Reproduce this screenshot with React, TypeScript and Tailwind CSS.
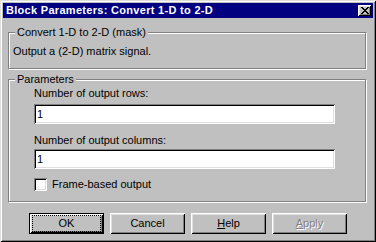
import React from "react";

function CloseGlyph() {
  const px: [number, number][] = [
    [0, 0], [1, 0], [6, 0], [7, 0],
    [1, 1], [2, 1], [5, 1], [6, 1],
    [2, 2], [3, 2], [4, 2], [5, 2],
    [3, 3], [4, 3],
    [2, 4], [3, 4], [4, 4], [5, 4],
    [1, 5], [2, 5], [5, 5], [6, 5],
    [0, 6], [1, 6], [6, 6], [7, 6],
  ];
  return (
    <svg width="8" height="7" viewBox="0 0 8 7" shapeRendering="crispEdges">
      {px.map(([x, y], i) => (
        <rect key={i} x={x} y={y} width="1" height="1" fill="#000" />
      ))}
    </svg>
  );
}

const bevel =
  "shadow-[inset_1px_1px_0_#fff,inset_-1px_-1px_0_#000,inset_2px_2px_0_#dfdfdf,inset_-2px_-2px_0_#808080]";
const sunken =
  "shadow-[inset_1px_1px_0_#808080,inset_-1px_-1px_0_#fff,inset_2px_2px_0_#000,inset_-2px_-2px_0_#dfdfdf]";

export default function App() {
  return (
    <div className="w-[376px] h-[242px] bg-[#c0c0c0] p-[3px] text-[11px] leading-[13px] text-black font-['Liberation_Sans',Arial,sans-serif] shadow-[inset_1px_1px_0_#dfdfdf,inset_-1px_-1px_0_#000,inset_2px_2px_0_#fff,inset_-2px_-2px_0_#808080]">
      <div className="h-[15px] bg-[#000080] flex items-center justify-between pl-[3px] pr-[2px]">
        <span className="text-white font-bold tracking-[0.3px]">Block Parameters: Convert 1-D to 2-D</span>
        <div className={`w-[13px] h-[11px] bg-[#c0c0c0] flex items-center justify-center ${bevel}`}>
          <CloseGlyph />
        </div>
      </div>

      <div className="px-[5px]">
        <fieldset className="mt-[8px] w-[358px] border border-[#808080] shadow-[1px_1px_0_#fff,inset_1px_1px_0_#fff] pl-[4px] pr-[4px] pt-[6px] pb-[10px]">
          <legend className="ml-[2px] px-[2px] bg-[#c0c0c0]">Convert 1-D to 2-D (mask)</legend>
          <div>Output a (2-D) matrix signal.</div>
        </fieldset>

        <fieldset className="mt-[4px] w-[358px] border border-[#808080] shadow-[1px_1px_0_#fff,inset_1px_1px_0_#fff] pl-[4px] pr-[4px] pt-[1px] pb-[10px]">
          <legend className="ml-[2px] px-[2px] bg-[#c0c0c0]">Parameters</legend>
          <div className="pl-[21px] flex flex-col">
            <div>Number of output rows:</div>
            <div className={`mt-[4px] w-[301px] h-[20px] bg-white flex items-center pl-[3px] ${sunken}`}>1</div>
            <div className="mt-[10px]">Number of output columns:</div>
            <div className={`mt-[2px] w-[301px] h-[20px] bg-white flex items-center pl-[3px] ${sunken}`}>1</div>
            <div className="mt-[9px] flex items-center h-[13px] gap-[5px]">
              <div className={`w-[13px] h-[13px] bg-white ${sunken}`} />
              <span>Frame-based output</span>
            </div>
          </div>
        </fieldset>
      </div>

      <div className="mt-[11px] flex justify-center gap-[6px]">
        <button className="w-[75px] h-[21px] border border-black bg-[#c0c0c0] p-0">
          <div className={`w-full h-full flex items-center justify-center ${bevel}`}>
            <div className="w-[67px] h-[15px] outline-1 outline-dotted outline-black flex items-center justify-center">
              OK
            </div>
          </div>
        </button>
        <button className={`w-[75px] h-[21px] bg-[#c0c0c0] flex items-center justify-center ${bevel}`}>
          Cancel
        </button>
        <button className={`w-[75px] h-[21px] bg-[#c0c0c0] flex items-center justify-center ${bevel}`}>
          <span><u>H</u>elp</span>
        </button>
        <button className={`w-[75px] h-[21px] bg-[#c0c0c0] flex items-center justify-center text-[#808080] [text-shadow:1px_1px_0_#fff] ${bevel}`}>
          <span><u>A</u>pply</span>
        </button>
      </div>
    </div>
  );
}
